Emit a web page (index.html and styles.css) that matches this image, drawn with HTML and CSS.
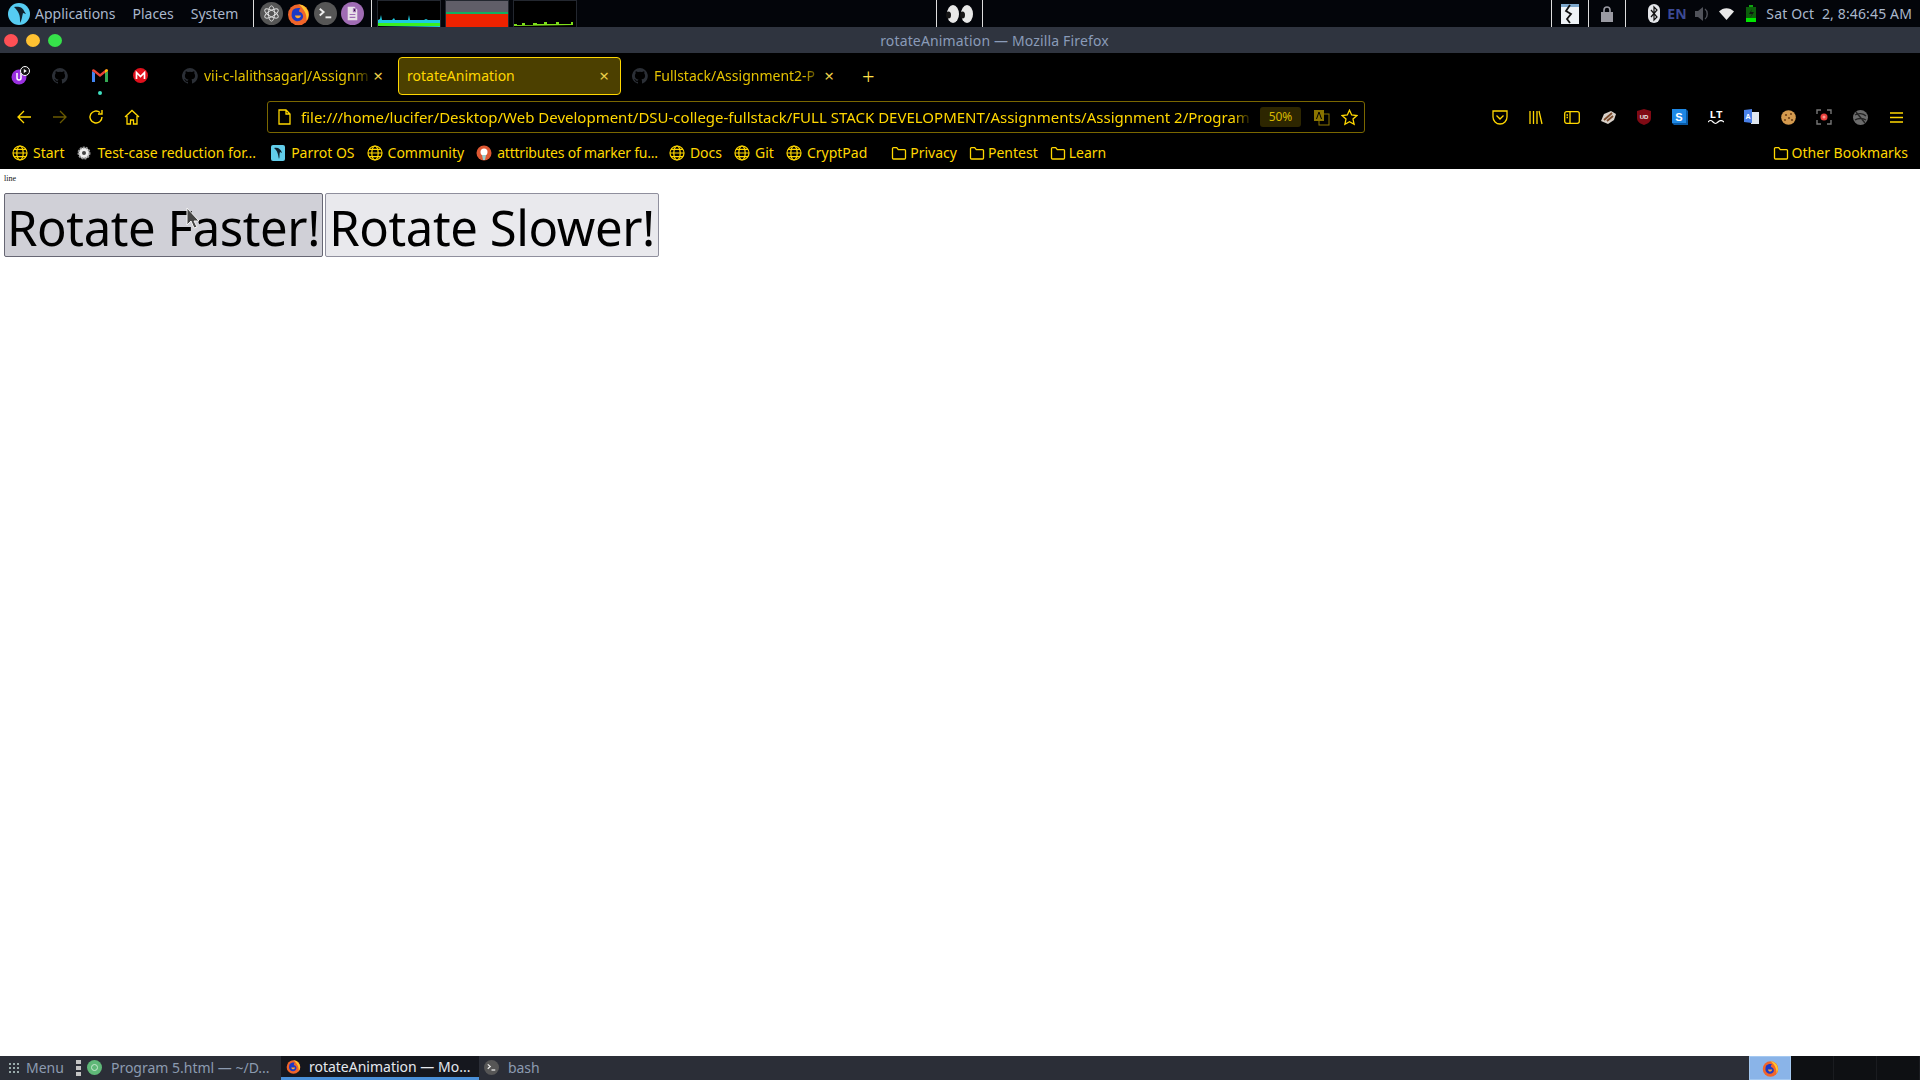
FILE: index.html
```html
<!DOCTYPE html>
<html>
<head>
  <meta charset="UTF-8">
  <title>rotateAnimation</title>
  <link rel="stylesheet" href="styles.css">
</head>
<body>
  <svg class="defs">
    <symbol id="globe" viewBox="0 0 16 16"><g fill="none" stroke="currentColor" stroke-width="1.2"><circle cx="8" cy="8" r="7"/><ellipse cx="8" cy="8" rx="3.2" ry="7"/><path d="M1 8h14M2 4.4h12M2 11.6h12"/></g></symbol>
    <symbol id="folder" viewBox="0 0 16 16"><path d="M1.5 13V3.6c0-.6.4-1 1-1h3.2l1.6 2h6.200c.6 0 1 .4 1 1V13c0 .6-.4 1-1 1h-11c-.6 0-1-.4-1-1z" fill="none" stroke="currentColor" stroke-width="1.300"/></symbol>
    <symbol id="github" viewBox="0 0 16 16"><path fill="#2b2f36" d="M8 0a8 8 0 0 0-2.500 15.600c.4.100.5-.2.500-.4v-1.400c-2.200.5-2.700-1-2.700-1-.4-.9-.9-1.200-.9-1.200-.7-.5.100-.5.100-.5.800.100 1.200.8 1.200.8.700 1.200 1.900.9 2.300.7.100-.5.300-.9.500-1.100-1.800-.2-3.600-.9-3.600-4 0-.9.300-1.600.8-2.100-.1-.2-.4-1 .1-2.100 0 0 .7-.2 2.200.8a7.600 7.600 0 0 1 4 0c1.500-1 2.200-.8 2.200-.8.400 1.100.200 1.900.100 2.100.5.600.8 1.300.8 2.100 0 3.100-1.900 3.700-3.700 3.900.3.300.6.800.6 1.500v2.200c0 .2.100.5.600.4A8 8 0 0 0 8 0z"/></symbol>
    <symbol id="firefox" viewBox="0 0 16 16"><circle cx="8" cy="8.500" r="7.300" fill="#f0652a"/><path d="M8 1.200c3.800.4 7 3.300 7 7.300 0 1.500-.5 3-1.400 4.100C14 8 11.500 4 8 1.200z" fill="#ffc52e"/><path d="M3.800 5.500c1.500-1.500 3.500-2 5.500-1.500-.8.800-1 1.700-.8 2.500 1.500.3 2.700 1.600 2.700 3.100 0 2-1.700 3.400-3.700 3.400-2.300 0-4.200-1.800-4.300-4 0-1.300.2-2.500.6-3.500z" fill="#1d39c4"/><path d="M5.500 9h4.200c-.2 1.200-1.100 1.900-2.200 1.900-.9 0-1.700-.7-2-1.900z" fill="#ffa92e"/></symbol>
    <symbol id="term" viewBox="0 0 24 24"><circle cx="12" cy="12" r="12" fill="#565656"/><path d="M6 7l4 3.500L6 14" fill="none" stroke="#eee" stroke-width="2"/><path d="M12 16h6" stroke="#eee" stroke-width="2"/></symbol>
  </svg>

  <div class="topbar">
    <div class="logo"><svg width="22" height="22" viewBox="0 0 22 22"><circle cx="11" cy="11" r="11" fill="#56ccf2"/><path d="M6 4c4-1 9 0 10 4l2 3-3-1c-1 3-1 7-3 10 0-4 0-7-1-9-1-3-3-5-5-7z" fill="#10202c"/></svg></div>
    <span class="menu first">Applications</span>
    <span class="menu">Places</span>
    <span class="menu">System</span>
    <div class="launchers">
      <svg width="23" height="23" viewBox="0 0 24 24"><circle cx="12" cy="12" r="12" fill="#565656"/><g fill="none" stroke="#ddd" stroke-width="1"><ellipse cx="12" cy="12" rx="8" ry="3.200" transform="rotate(30 12 12)"/><ellipse cx="12" cy="12" rx="8" ry="3.200" transform="rotate(90 12 12)"/><ellipse cx="12" cy="12" rx="8" ry="3.200" transform="rotate(150 12 12)"/></g></svg>
      <svg width="23" height="26" viewBox="0 0 16 16"><use href="#firefox"/></svg>
      <svg width="23" height="23" viewBox="0 0 24 24"><use href="#term"/></svg>
      <svg width="23" height="23" viewBox="0 0 24 24"><circle cx="12" cy="12" r="12" fill="#a06cb4"/><path d="M7 5h7l3 3v11H7z" fill="#e8e0e8"/><path d="M9 13h6M9 16h6M13 7h2v3h-2z" stroke="#a06cb4" stroke-width="1.200"/></svg>
    </div>
    <div class="graphs">
      <div class="graph"><svg width="64" height="27" viewBox="0 0 64 27"><path d="M1 26v-6l2-1 1-4 1 5h10l2-2 1 2h13l1-5 1 5h14l2-1 2 1h14v7z" fill="#1ecbe1"/><path d="M1 26v-3h62v3z" fill="#3cf01e"/></svg></div>
      <div class="graph"><svg width="64" height="27" viewBox="0 0 64 27"><rect width="64" height="12" fill="#605e68"/><rect y="12" width="64" height="2" fill="#10b060"/><rect y="14" width="64" height="13" fill="#ee2200"/></svg></div>
      <div class="graph"><svg width="64" height="27" viewBox="0 0 64 27"><path d="M1 26v-2h3v1h5v-2h3v2h8v-2h4v1h7v-2h3v2h9v-2h3v2h12v-2h2v3z" fill="#7fe01a"/></svg></div>
    </div>
    <div class="eyes"><svg width="30" height="20" viewBox="0 0 30 20"><g fill="#e8e8e8"><ellipse cx="8" cy="10" rx="6" ry="9"/><ellipse cx="22" cy="10" rx="6" ry="9"/></g><g fill="#161616"><ellipse cx="3.500" cy="11" rx="2.500" ry="3.500"/><ellipse cx="17.500" cy="11" rx="2.500" ry="3.500"/></g></svg></div>
    <div class="tray-btn snap"><svg width="18" height="20" viewBox="0 0 18 20"><rect width="18" height="20" fill="#eef2f6"/><rect width="18" height="3" fill="#7da7cc"/><path d="M9 1L5 7l5 3-4 5 3 4" fill="none" stroke="#111" stroke-width="1.800"/></svg></div>
    <div class="tray-btn lock"><svg width="12" height="16" viewBox="0 0 12 16"><rect y="6" width="12" height="10" fill="#9a9aa2"/><path d="M3 7V4a3 3 0 0 1 6 0v3" fill="none" stroke="#9a9aa2" stroke-width="1.600"/></svg></div>
    <div class="tray">
      <svg width="12" height="19" viewBox="0 0 12 19"><rect width="12" height="19" rx="6" fill="#e4e6ea"/><path d="M3 6l6 7-3 3V3l3 3-6 7" fill="none" stroke="#111" stroke-width="1.200"/></svg>
      <span class="lang">EN</span>
      <svg width="15" height="16" viewBox="0 0 15 16"><path d="M0 5h3l5-4v14l-5-4H0z" fill="#50525a"/><path d="M10 3c3 2 3 8 0 10" fill="none" stroke="#50525a" stroke-width="1.400"/></svg>
      <svg width="15" height="12" viewBox="0 0 15 12"><path d="M0 3.500C4-1 11-1 15 3.500L7.500 12z" fill="#e8e8e8"/></svg>
      <svg width="10" height="17" viewBox="0 0 10 17"><rect x="3" width="4" height="2" fill="#0fa30f"/><rect y="2" width="10" height="15" fill="#0c5f0c"/><rect y="13" width="10" height="4" fill="#00e600"/><path d="M6 4L3 9h3l-2 4 4-6H5z" fill="#111"/></svg>
      <span class="clock">Sat Oct  2, 8:46:45 AM</span>
    </div>
  </div>

  <div class="titlebar">
    <div class="lights"><i class="red"></i><i class="amber"></i><i class="green"></i></div>
    <span class="wintitle">rotateAnimation — Mozilla Firefox</span>
  </div>

  <div class="tabs">
    <div class="pin first-pin"><svg width="20" height="20" viewBox="0 0 20 20"><circle cx="8" cy="11" r="7.500" fill="#9a30e0"/><path d="M6 7v5a2 2 0 0 0 4 0V7" fill="none" stroke="#fff" stroke-width="1.500"/><circle cx="14" cy="5" r="4.500" fill="#111" stroke="#fff"/><path d="M12.800 3l3 2-3 2z" fill="#fff"/></svg></div>
    <div class="pin"><svg width="16" height="16"><use href="#github"/></svg></div>
    <div class="pin gmail"><svg width="16" height="13" viewBox="0 0 16 13"><path d="M0 13V2l3 2v9z" fill="#4285f4"/><path d="M16 13V2l-3 2v9z" fill="#34a853"/><path d="M0 2c0-2 2-2 3-1l5 4 5-4c1-1 3-1 3 1l-3 2-5 4-5-4z" fill="#ea4335"/><path d="M13 1c1-1 3-1 3 1l-3 2z" fill="#fbbc04"/></svg></div>
    <div class="pin"><svg width="15" height="15" viewBox="0 0 15 15"><circle cx="7.500" cy="7.500" r="7.500" fill="#e0101c"/><path d="M3.500 11V4.500l4 4 4-4V11" fill="none" stroke="#fff" stroke-width="1.700"/></svg></div>
    <div class="tab tab-a"><svg width="16" height="16"><use href="#github"/></svg><span class="tabname">vii-c-lalithsagarJ/Assignm</span><span class="close">×</span></div>
    <div class="tab active"><span class="tabname">rotateAnimation</span><span class="close">×</span></div>
    <div class="tab tab-c"><svg width="16" height="16"><use href="#github"/></svg><span class="tabname">Fullstack/Assignment2-P</span><span class="close">×</span></div>
    <span class="newtab">+</span>
  </div>

  <div class="navbar">
    <div class="navbtns">
      <svg width="16" height="16" viewBox="0 0 16 16"><path d="M15 8H2M8 2L2 8l6 6" fill="none" stroke="currentColor" stroke-width="1.300"/></svg>
      <svg class="off" width="16" height="16" viewBox="0 0 16 16"><path d="M1 8h13M8 2l6 6-6 6" fill="none" stroke="currentColor" stroke-width="1.300"/></svg>
      <svg width="16" height="16" viewBox="0 0 16 16"><path d="M14 8a6 6 0 1 1-2-4.500M14 1v4h-4" fill="none" stroke="currentColor" stroke-width="1.400"/></svg>
      <svg width="16" height="16" viewBox="0 0 16 16"><path d="M1 8l7-6.500L15 8M3 7v8h3.500v-4h3v4H13V7" fill="none" stroke="currentColor" stroke-width="1.300"/></svg>
    </div>
    <div class="urlbar">
      <svg class="pageicon" width="13" height="16" viewBox="0 0 13 16"><path d="M1 1h7l4 4v10H1zM8 1v4h4" fill="none" stroke="currentColor" stroke-width="1.300"/></svg>
      <span class="url">file:///home/lucifer/Desktop/Web Development/DSU-college-fullstack/FULL STACK DEVELOPMENT/Assignments/Assignment 2/Program</span>
      <span class="zoomlevel">50%</span>
      <svg class="translate" width="17" height="17" viewBox="0 0 17 17"><rect x="6" y="5" width="10" height="11" fill="none" stroke="#8a7400"/><rect x="1" y="1" width="10" height="11" fill="#8a7400"/><path d="M3.500 10L6 3l2.500 7" fill="none" stroke="#000"/></svg>
      <svg class="star" width="17" height="17" viewBox="0 0 17 17"><path d="M8.500 1.200l2.200 4.800 5.200.6-3.900 3.500 1.100 5.200-4.600-2.600-4.600 2.600 1.100-5.200L1.100 6.600 6.300 6z" fill="none" stroke="currentColor" stroke-width="1.300"/></svg>
    </div>
    <div class="addons">
      <span><svg width="16" height="15" viewBox="0 0 16 15"><path d="M1 1h14v6a7 7 0 0 1-14 0zM4.500 5.500L8 9l3.500-3.500" fill="none" stroke="currentColor" stroke-width="1.300"/></svg></span>
      <span><svg width="14" height="15" viewBox="0 0 14 15"><path d="M1 1v13M4.500 1v13M8 1v13M10 1l3 13" fill="none" stroke="currentColor" stroke-width="1.300"/></svg></span>
      <span><svg width="16" height="13" viewBox="0 0 16 13"><rect x=".7" y=".7" width="14.600" height="11.600" rx="2" fill="none" stroke="currentColor" stroke-width="1.300"/><path d="M6 1v11M2.500 4H4M2.500 6.500H4" stroke="currentColor" stroke-width="1.300"/></svg></span>
      <span><svg width="17" height="13" viewBox="0 0 17 13"><path d="M1 10L4 3l7-3 5 3-2 6-6 4z" fill="#d8d0c8"/><path d="M4 9l8-7M7 10l6-5" stroke="#7a4a2a" stroke-width="1.800"/></svg></span>
      <span><svg width="14" height="16" viewBox="0 0 14 16"><path d="M0 2l7-2 7 2v7c0 4-4 6-7 7-3-1-7-3-7-7z" fill="#800a14"/><text x="7" y="10" class="ub">UD</text></svg></span>
      <span><svg width="16" height="16" viewBox="0 0 16 16"><rect width="14" height="14" fill="#1e88e5"/><path d="M14 0l2 2v14H2l-2-2h14z" fill="#0b5aa5"/><text x="7" y="11.500" class="sk">S</text></svg></span>
      <span class="lt"><b>LT</b><svg width="16" height="4" viewBox="0 0 16 4"><path d="M0 2c2-2 3-2 5 0s3 2 5 0 4-2 6 0" fill="none" stroke="#fff" stroke-width="1.200"/></svg></span>
      <span><svg width="16" height="16" viewBox="0 0 16 16"><rect x="7" y="3" width="8" height="12" fill="#dfe6f0"/><path d="M0 1l8-1v14l-8-1z" fill="#4a80e8"/><text x="4" y="9.500" class="tr">A</text></svg></span>
      <span><svg width="15" height="15" viewBox="0 0 15 15"><circle cx="7.500" cy="7.500" r="7.300" fill="#d49a4e"/><g fill="#6e3f16"><circle cx="5" cy="5" r="1.100"/><circle cx="10" cy="4" r="1"/><circle cx="8" cy="8" r="1.100"/><circle cx="4" cy="10" r="1"/><circle cx="11" cy="10" r="1.100"/></g></svg></span>
      <span><svg width="16" height="16" viewBox="0 0 16 16"><path d="M1 5V1h4M11 1h4v4M15 11v4h-4M5 15H1v-4" fill="none" stroke="#777" stroke-width="1.400"/><circle cx="8" cy="8" r="3.500" fill="#e8413c"/><circle cx="8" cy="8" r="1.500" fill="#f59a90"/></svg></span>
      <span><svg width="15" height="15" viewBox="0 0 15 15"><circle cx="7.500" cy="7.500" r="7.500" fill="#6c6c6c"/><path d="M2 5c3-2 8-2 11 1M2 10c3-2 8-2 11 0M3 2l9 11" fill="none" stroke="#222" stroke-width="1.400"/></svg></span>
      <span><svg width="13" height="11" viewBox="0 0 13 11"><path d="M0 1h13M0 5.500h13M0 10h13" stroke="currentColor" stroke-width="1.300"/></svg></span>
    </div>
  </div>

  <div class="bookmarks">
    <a class="bm"><svg class="ic"><use href="#globe"/></svg>Start</a>
    <a class="bm bm-test"><svg class="ic" viewBox="0 0 16 16"><circle cx="8" cy="8" r="5.500" fill="#eee" stroke="#999" stroke-dasharray="2 1" stroke-width="2"/><circle cx="8" cy="8" r="2" fill="#444"/></svg>Test-case reduction for...</a>
    <a class="bm"><svg class="ic" viewBox="0 0 16 16"><rect x="1" width="14" height="16" rx="2" fill="#62cdea"/><path d="M4 3c4-1 7 1 8 5l-2-1c-1 2 0 5-1 7-1-4-1-8-5-11z" fill="#10202c"/></svg>Parrot OS</a>
    <a class="bm"><svg class="ic"><use href="#globe"/></svg>Community</a>
    <a class="bm bm-marker"><svg class="ic" viewBox="0 0 16 16"><circle cx="8" cy="8" r="7.500" fill="#de5833"/><circle cx="8" cy="7" r="3.500" fill="#fff"/><path d="M6 10h4l-1 5H7z" fill="#9cc"/></svg>atttributes of marker fu...</a>
    <a class="bm"><svg class="ic"><use href="#globe"/></svg>Docs</a>
    <a class="bm"><svg class="ic"><use href="#globe"/></svg>Git</a>
    <a class="bm"><svg class="ic"><use href="#globe"/></svg>CryptPad</a>
    <a class="bm fold folderstart"><svg class="ic"><use href="#folder"/></svg>Privacy</a>
    <a class="bm fold"><svg class="ic"><use href="#folder"/></svg>Pentest</a>
    <a class="bm fold"><svg class="ic"><use href="#folder"/></svg>Learn</a>
    <a class="bm fold other"><svg class="ic"><use href="#folder"/></svg>Other Bookmarks</a>
  </div>

  <div class="page">
    <div class="line">line</div>
    <div class="btnrow">
      <button class="big hover">Rotate Faster!</button>
      <button class="big">Rotate Slower!</button>
    </div>
    <svg class="cursor" width="14" height="22" viewBox="0 0 14 22"><path d="M1 1v17l4-4 3 7 3-1-3-6h5z" fill="#444" stroke="#f4f4f4"/></svg>
  </div>

  <div class="taskbar">
    <svg class="dots" width="11" height="11" viewBox="0 0 11 11"><g fill="#9aa"><rect width="2" height="2"/><rect x="4" width="2" height="2"/><rect x="8" width="2" height="2"/><rect y="4" width="2" height="2"/><rect x="4" y="4" width="2" height="2"/><rect x="8" y="4" width="2" height="2"/><rect y="8" width="2" height="2"/><rect x="4" y="8" width="2" height="2"/><rect x="8" y="8" width="2" height="2"/></g></svg>
    <span class="startmenu">Menu</span>
    <div class="handle"><i></i><i></i><i></i></div>
    <div class="task first-task"><svg width="15" height="15" viewBox="0 0 15 15"><circle cx="7.500" cy="7.500" r="7.500" fill="#5fb878"/><circle cx="7.500" cy="7.500" r="3" fill="none" stroke="#c8e8d0"/></svg>Program 5.html — ~/D...</div>
    <div class="task current"><svg width="15" height="15"><use href="#firefox"/></svg>rotateAnimation — Mo...</div>
    <div class="task"><svg width="15" height="15" viewBox="0 0 24 24"><use href="#term"/></svg>bash</div>
    <div class="tb-right">
      <div class="tb-fox"><svg width="17" height="17"><use href="#firefox"/></svg></div>
      <div class="ws"></div><div class="ws"></div><div class="ws"></div>
    </div>
  </div>
</body>
</html>
```

FILE: styles.css
```css
* { box-sizing: border-box; }
html, body { margin: 0; height: 100%; }
body { width: 1920px; height: 1080px; display: flex; flex-direction: column; overflow: hidden; font-family: "Noto Sans", sans-serif; background: #fff; color: #ffd700; }
.defs { display: none; }
svg { display: block; flex: none; }

/* desktop panel */
.topbar { height: 27px; background: #03050a; display: flex; align-items: center; color: #a9b7cc; font-size: 14px; }
.logo { margin-left: 8px; width: 22px; }
.menu { margin-left: 17px; }
.menu.first { margin-left: 5px; }
.launchers { margin-left: 15px; width: 119px; height: 27px; border-left: 1px solid #ddd; border-right: 1px solid #ddd; display: flex; align-items: center; gap: 4px; padding-left: 6px; }
.graphs { margin-left: 5px; display: flex; gap: 4px; }
.graph { width: 64px; height: 27px; border: 1px solid #23272f; border-bottom: none; background: #000; overflow: hidden; }
.graph svg { margin: -1px; }
.eyes { margin-left: 359px; width: 47px; height: 27px; border-left: 1px solid #ddd; border-right: 1px solid #ddd; display: flex; align-items: center; justify-content: center; }
.tray-btn { height: 27px; display: flex; align-items: center; justify-content: center; border-left: 1px solid #ddd; }
.snap { margin-left: 568px; width: 37px; }
.lock { border-right: 1px solid #ddd; width: 38px; }
.tray { margin-left: 22px; display: flex; align-items: center; }
.lang { margin-left: 7px; width: 25px; color: #3c4a94; font-weight: 700; font-size: 14px; }
.tray svg:nth-of-type(2) { margin-left: 3px; }
.tray svg:nth-of-type(3) { margin-left: 9px; }
.tray svg:nth-of-type(4) { margin-left: 12px; }
.clock { margin-left: 10px; white-space: pre; letter-spacing: .15px; }

/* window title */
.titlebar { height: 26px; background: #2f343f; position: relative; display: flex; align-items: center; justify-content: center; }
.lights { position: absolute; left: 4px; top: 7px; display: flex; gap: 8px; }
.lights i { width: 14px; height: 13px; border-radius: 50%; }
.red { background: #ff5055; }
.amber { background: #ffc132; }
.green { background: #36e24a; }
.wintitle { font-size: 14px; color: #8a9bb8; margin-left: 69px; letter-spacing: .15px; }

/* tabs */
.tabs { height: 47px; background: #000; display: flex; align-items: center; font-size: 14px; padding-bottom: 2px; }
.pin { width: 40px; height: 40px; display: flex; align-items: center; justify-content: center; }
.first-pin { padding-left: 2px; }
.gmail { position: relative; }
.gmail::after { content: ""; position: absolute; left: 18px; bottom: 1px; width: 4px; height: 4px; border-radius: 50%; background: #3fe0c0; }
.tab { height: 38px; display: flex; align-items: center; }
.tab svg { margin-right: 6px; }
.tabname { flex: 1; min-width: 0; overflow: hidden; white-space: nowrap; color: #e4c200; -webkit-mask-image: linear-gradient(to right, #000 88%, transparent 100%); mask-image: linear-gradient(to right, #000 88%, transparent 100%); }
.close { font-size: 17px; line-height: 1; width: 12px; text-align: center; color: #e9cf4a; }
.tab-a { margin-left: 22px; width: 204px; padding-right: 2px; }
.active { margin-left: 12px; width: 223px; background: #4c4000; border: 1px solid #ffd700; border-radius: 4px; padding: 0 10px 0 8px; }
.active .tabname { color: #ffd700; -webkit-mask-image: none; mask-image: none; }
.tab-c { margin-left: 11px; width: 203px; }
.newtab { margin-left: 27px; font-size: 22px; font-weight: 300; line-height: 1; color: #ffe14a; }

/* toolbar */
.navbar { height: 34px; background: #000; display: flex; align-items: center; }
.navbtns { width: 267px; padding-left: 16px; display: flex; gap: 20px; }
.off { color: #6a5a00; }
.urlbar { width: 1098px; height: 32px; border: 1px solid #7a6700; border-radius: 3px; display: flex; align-items: center; padding-left: 10px; font-size: 15px; }
.url { margin-left: 10px; width: 951px; overflow: hidden; white-space: nowrap; -webkit-mask-image: linear-gradient(to right, #000 98%, transparent 100%); mask-image: linear-gradient(to right, #000 98%, transparent 100%); }
.zoomlevel { margin-left: 8px; width: 41px; height: 20px; line-height: 20px; text-align: center; background: #2d2600; border-radius: 3px; font-size: 12px; color: #d8b800; }
.translate { margin-left: 12px; }
.star { margin-left: 11px; }
.addons { margin-left: 117px; display: flex; align-items: center; }
.addons span { width: 36px; display: flex; flex-direction: column; align-items: center; }
.ub { font: 700 6px "Liberation Sans", sans-serif; fill: #eee; text-anchor: middle; }
.sk { font: 700 11px "Liberation Sans", sans-serif; fill: #fff; text-anchor: middle; }
.tr { font: 700 7px "Liberation Sans", sans-serif; fill: #fff; text-anchor: middle; }
.lt b { font: 700 11px/10px "Liberation Mono", monospace; color: #fff; }

/* bookmarks */
.bookmarks { height: 35px; background: #000; display: flex; align-items: center; padding: 2px 0 0 12px; font-size: 14px; }
.bm { display: flex; align-items: center; gap: 5px; margin-right: 12px; white-space: nowrap; }
.bm-test { margin-right: 14px; }
.bm-marker { letter-spacing: -.2px; margin-right: 11px; }
.fold { gap: 3px; }
.ic { width: 16px; height: 16px; }
.folderstart { margin-left: 12px; }
.other { margin-left: auto; margin-right: 12px; }

/* page */
.page { flex: 1; background: #fff; position: relative; padding: 5px 0 0 4px; }
.line { font: 8px/9px "Liberation Serif", serif; color: #111; }
.btnrow { margin-top: 10px; display: flex; gap: 2px; }
.big { height: 64px; padding: 0; font: 49px "Noto Sans", sans-serif; letter-spacing: -.4px; white-space: nowrap; color: #000; background: #e9e9ed; border: 1px solid #8f8f9d; border-radius: 2px; width: 334px; }
.big.hover { background: #d0d0d7; border-color: #676774; width: 319px; }
.cursor { position: absolute; left: 186px; top: 38px; }

/* bottom panel */
.taskbar { height: 24px; background: #2b2e37; display: flex; align-items: center; font-size: 14px; color: #8c9bb0; }
.dots { margin-left: 9px; }
.startmenu { margin-left: 6px; padding-bottom: 1px; }
.handle { margin-left: 12px; width: 5px; display: flex; flex-direction: column; gap: 2px; }
.handle i { height: 4px; background: #c4c4c4; }
.task { height: 24px; display: flex; align-items: center; gap: 9px; padding: 0 0 1px 5px; }
.first-task { margin-left: 1px; width: 199px; }
.current { width: 198px; gap: 8px; background: #15171e; color: #e4e8ee; border-bottom: 3px solid #4a90d9; padding-bottom: 0; }
.tb-right { margin-left: auto; display: flex; height: 24px; }
.tb-fox { width: 42px; background: #8ab4e8; border: 1px solid #a4c8f0; display: flex; align-items: center; justify-content: center; }
.ws { width: 43px; background: #0e1013; border-right: 1px solid #1a1c20; }
```
